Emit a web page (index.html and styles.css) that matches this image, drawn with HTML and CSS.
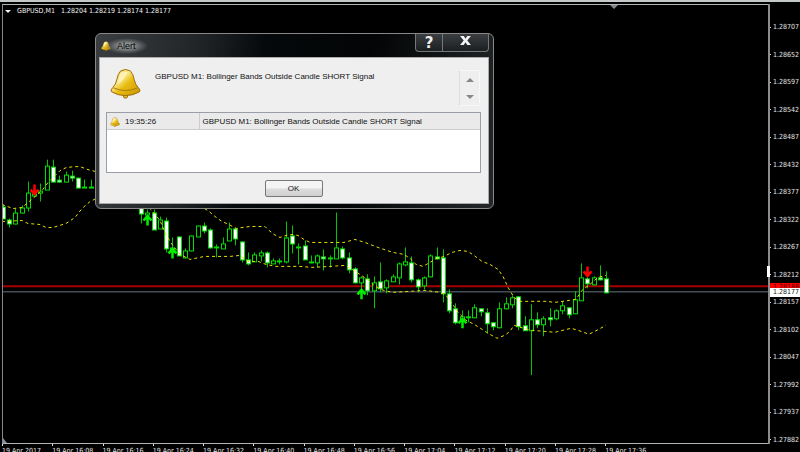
FILE: index.html
```
<!DOCTYPE html>
<html lang="en">
<head>
    <meta charset="UTF-8">
    <meta name="viewport" content="width=device-width, initial-scale=1.0">
    <title>GBPUSD,M1</title>
    <link rel="stylesheet" href="styles.css">
</head>
<body>
    <!-- bell symbol, used three times in the alert window -->
    <svg class="defs" aria-hidden="true">
        <defs>
            <linearGradient id="gold" x1="0" y1="0" x2="1" y2="1">
                <stop offset="0" stop-color="#f0c52c"/>
                <stop offset="0.35" stop-color="#fbe98a"/>
                <stop offset="0.55" stop-color="#e9bd12"/>
                <stop offset="1" stop-color="#c79400"/>
            </linearGradient>
            <symbol id="bell" viewBox="0 0 32 32">
                <circle cx="16" cy="29" r="2.2" fill="#e8b914" stroke="#9a6a10"/>
                <path d="M11 3Q16 0 21 3Q24 6 25 12Q26 17 29 20Q32 23 30.500 24.500Q24 28.500 16 28.500Q8 28.500 1.500 24.500Q0 23 3 20Q6 17 7 12Q8 6 11 3Z" fill="url(#gold)" stroke="#9a6a10"/>
                <path d="M3.500 20.500Q16 26 28.500 20.500" fill="none" stroke="#a87810"/>
                <path d="M11 5Q14.500 3 18 4.500Q15 12 8.500 17Q9 9 11 5Z" fill="#fff8cc" opacity=".7"/>
            </symbol>
        </defs>
    </svg>

    <div class="terminal">
        <main class="plot">
            <svg class="chart" viewBox="3 5 765 439" preserveAspectRatio="none"></svg>
            <p class="quote"><i></i><span>GBPUSD,M1</span><span>1.28204 1.28219 1.28174 1.28177</span></p>
        </main>
        <aside class="prices">
            <ol></ol>
            <i class="handle"></i>
            <b class="tag ask">1.28188</b>
            <b class="tag bid">1.28177</b>
        </aside>
        <ol class="times"></ol>
    </div>

    <section class="alert" role="dialog" aria-labelledby="title">
        <header>
            <svg class="bell-small"><use href="#bell"/></svg>
            <h1 id="title">Alert</h1>
            <div class="win-btns">
                <button class="help" aria-label="Help">?</button>
                <button class="close" aria-label="Close">
                    <svg viewBox="0 0 12 10"><path d="M0 0H4L6 3L8 0H12L8 5L12 10H8L6 7L4 10H0L4 5Z"/></svg>
                </button>
            </div>
        </header>
        <div class="content">
            <div class="top">
                <svg class="bell-big"><use href="#bell"/></svg>
                <p>GBPUSD M1: Bollinger Bands Outside Candle SHORT Signal</p>
                <div class="spin">
                    <button aria-label="Up"><i class="up"></i></button>
                    <button aria-label="Down"><i class="down"></i></button>
                </div>
            </div>
            <div class="list">
                <table>
                    <tr>
                        <td class="time"><svg class="bell-row"><use href="#bell"/></svg>19:35:26</td>
                        <td>GBPUSD M1: Bollinger Bands Outside Candle SHORT Signal</td>
                    </tr>
                </table>
            </div>
            <button class="ok">OK</button>
        </div>
    </section>
    <script src="chart.js"></script>
</body>
</html>
```
FILE: styles.css
```
*{
    box-sizing: border-box;
    margin: 0;
    padding: 0;
}
body{
    background-color: #000;
    color: #e4e4e4;
    font-family: "DejaVu Sans Condensed", "DejaVu Sans", sans-serif;
    font-size: 7px;
    line-height: 8px;
    overflow: hidden;
}
ol{
    list-style: none;
}
button{
    font: inherit;
    border: 0;
    background: none;
}
.defs{
    position: absolute;
    width: 0;
    height: 0;
}

/* chart window */
.terminal{
    display: grid;
    grid-template-columns: 1fr 32px;
    grid-template-rows: 1fr 8px;
    height: 100vh;
    padding: 2px 0 0 2px;
    border-top: 2px solid #c4c8c8;
}
.plot{
    position: relative;
    min-height: 0;
    border: 1px solid #b4b4b4;
    border-left-color: #888;
    border-right: 0;
}
.chart{
    display: block;
    width: 100%;
    height: 100%;
}
.quote{
    position: absolute;
    top: 2px;
    left: 2px;
    display: flex;
    gap: 6px;
    align-items: center;
    color: #f4f4f4;
}
.quote i{
    border: 3px solid transparent;
    border-top-color: #eee;
    border-bottom: 0;
}

/* price scale */
.prices{
    position: relative;
    border-left: 2px solid #8c8c8c;
    padding-top: 19px;
}
.prices ol{
    display: flex;
    flex-direction: column;
    justify-content: space-between;
    height: 100%;
}
.prices li{
    display: flex;
    align-items: center;
    gap: 2px;
    height: 8px;
}
.prices li::before{
    content: "";
    width: 1px;
    height: 1px;
    background-color: #ddd;
}
.handle{
    position: absolute;
    left: -3px;
    top: 262px;
    width: 3px;
    height: 11px;
    background-color: #fff;
}
.tag{
    position: absolute;
    left: 0;
    right: 0;
    padding-left: 3px;
    font-weight: normal;
    overflow: hidden;
}
.ask{
    top: 279px;
    height: 5px;
    background-color: #f00;
    color: #400;
}
.bid{
    top: 284px;
    height: 9px;
    background-color: #fff;
    color: #222;
}

/* time scale */
.times{
    grid-column: 1 / 3;
    display: flex;
    overflow: hidden;
}
.times li{
    flex: none;
    width: 6.3%;
    white-space: nowrap;
}
.times li::before{
    content: "";
    display: block;
    width: 1px;
    height: 2px;
    margin-bottom: 1px;
    background-color: #ddd;
}

/* alert window */
.alert{
    position: absolute;
    left: 95px;
    top: 33px;
    width: 399px;
    padding: 0 4px 4px 3px;
    border: 1px solid #888;
    border-radius: 6px;
    background: linear-gradient(100deg, #3a3e40 0, #202426 25%, #06090b 40%, #020405 65%, #24282a 100%);
    color: #111;
    font-family: "Liberation Sans", sans-serif;
    font-size: 8px;
    line-height: 12px;
}
.alert header{
    display: flex;
    align-items: center;
    height: 23px;
    padding-left: 2px;
}
.bell-small, .bell-row{
    width: 10px;
    height: 10px;
}
.alert h1{
    margin-left: -6px;
    padding: 2px 12px;
    color: #000;
    font-size: 9px;
    font-weight: normal;
    background: radial-gradient(closest-side, #909394 30%, #6c707180 75%, #33373900);
}
.win-btns{
    display: flex;
    align-self: flex-start;
    height: 18px;
    margin-left: auto;
    border: 1px solid #777;
    border-top: 0;
    border-radius: 0 0 4px 4px;
    background: linear-gradient(#3a3e40, #1c1f21);
}
.help{
    width: 27px;
    border-right: 1px solid #777;
    color: #eee;
    font: bold 15px "DejaVu Sans", sans-serif;
}
.close{
    width: 45px;
}
.close svg{
    width: 11px;
    height: 9px;
    fill: #f4f4f4;
}
.content{
    padding: 10px 7px 6px 6px;
    border: 1px solid #aaa;
    background-color: #efefef;
    text-align: center;
}
.top{
    display: flex;
    align-items: flex-start;
    height: 44px;
    padding: 0 1px 0 4px;
    text-align: left;
}
.bell-big{
    flex: none;
    width: 31px;
    height: 31px;
}
.top p{
    flex: 1;
    padding: 3px 0 0 14px;
}
.spin{
    width: 21px;
    margin-top: 2px;
    border: 1px solid #f8f8f8;
    border-left-color: #ddd;
}
.spin button{
    display: flex;
    align-items: center;
    justify-content: center;
    width: 100%;
    height: 17px;
}
.spin i{
    border: 0 solid transparent;
    border-width: 0 4px;
}
.spin .up{
    border-bottom: 4px solid #888;
}
.spin .down{
    border-top: 4px solid #888;
}
.list{
    height: 61px;
    border: 1px solid #9a9ea6;
    background-color: #fff;
}
.list table{
    width: 100%;
    border-collapse: collapse;
    text-align: left;
}
.list td{
    height: 16px;
    padding: 2px 3px 0;
    border-bottom: 1px solid #ccc;
    background-color: #eaeaea;
}
.list .time{
    width: 92px;
    border-right: 1px solid #ccc;
}
.bell-row{
    margin-right: 5px;
    vertical-align: middle;
}
.ok{
    width: 58px;
    height: 17px;
    margin-top: 7px;
    border: 1px solid #777;
    border-radius: 2px;
    background: linear-gradient(#f4f4f4 45%, #dcdcdc 55%, #cfcfcf);
    color: #111;
}
```
FILE: chart.js
```
// candles: index, high, body top, body bottom, low, type (u = up, d = down)
var candles = [
    [0,205,207,219,219,'d'],[1,219,220,224,228,'d'],[2,209,213,224,225,'u'],[3,206,208,213,214,'u'],
    [4,182,193,208,212,'u'],[5,188,194,196,197,'u'],[6,184,191,193,202,'u'],[7,160,166,190,190,'u'],
    [8,160,167,182,182,'d'],[9,176,180,182,183,'d'],[10,172,175,182,182,'u'],[11,171,176,178,182,'d'],
    [12,178,178,188,188,'d'],[13,180,187,188,188,'u'],[14,180,187,188,188,'u'],
    [22,205,207,214,224,'d'],[23,210,213,215,217,'u'],[24,210,213,230,230,'d'],[25,217,220,229,229,'u'],
    [26,218,221,249,253,'d'],[27,238,248,252,253,'u'],[28,237,237,256,256,'d'],[29,249,251,258,259,'u'],
    [30,236,236,251,252,'u'],[31,226,226,237,237,'u'],[32,223,226,231,234,'d'],[33,229,230,248,249,'d'],
    [34,245,247,248,258,'u'],[35,238,244,249,249,'u'],[36,223,229,241,241,'u'],[37,228,229,239,246,'d'],
    [38,242,242,260,263,'d'],[39,253,260,264,266,'d'],[40,253,255,262,262,'u'],[41,251,253,256,262,'u'],
    [42,252,253,263,268,'d'],[43,259,261,264,264,'u'],[44,259,261,262,265,'u'],[45,222,238,262,264,'u'],
    [46,226,236,244,254,'d'],[47,244,247,248,265,'u'],[48,241,246,260,260,'d'],[49,256,262,263,264,'u'],
    [50,255,256,263,268,'u'],[51,250,257,259,271,'d'],[52,256,258,259,268,'u'],[53,213,248,259,259,'u'],
    [54,247,249,258,260,'d'],[55,253,258,270,274,'d'],[56,268,269,283,284,'d'],[57,277,278,283,290,'u'],
    [58,275,279,291,296,'d'],[59,277,283,291,309,'u'],[60,263,282,289,293,'d'],[61,280,281,288,294,'u'],
    [62,275,277,282,282,'u'],[63,263,264,278,285,'u'],[64,248,262,265,267,'u'],[65,257,263,280,283,'d'],
    [66,279,280,287,293,'d'],[67,277,278,286,290,'u'],[68,255,256,277,278,'u'],[69,248,257,259,260,'d'],
    [70,250,258,294,303,'d'],[71,290,294,311,314,'d'],[72,304,309,323,325,'d'],[73,311,317,320,322,'u'],
    [74,311,317,318,323,'u'],[75,305,308,318,318,'u'],[76,309,309,312,317,'d'],[77,309,313,324,334,'d'],
    [78,323,323,327,331,'d'],[79,303,309,328,329,'u'],[80,298,304,309,310,'u'],[81,296,298,305,309,'u'],
    [82,297,297,327,331,'d'],[83,317,326,331,331,'d'],[84,305,320,331,376,'u'],[85,313,320,325,329,'d'],
    [86,317,319,325,337,'u'],[87,309,318,320,327,'d'],[88,310,311,319,321,'u'],[89,302,306,311,315,'u'],
    [90,308,308,315,319,'d'],[91,292,300,314,315,'u'],[92,264,278,301,301,'u'],[93,277,279,284,289,'d'],
    [94,277,278,285,286,'u'],[95,266,278,280,281,'d'],[96,272,279,293,294,'d']
];

// bollinger bands
var bands = [
    '2,205 13,209 22,208 28,203 35,197 42,191 48,183 55,176 60,171 66,168 74,167 80,167 88,170 96,172 150,180 208,211 215,217 222,222 229,225 236,229 242,228 250,227 265,227 268,230 274,235 280,238 286,236 292,235 298,236 304,240 310,243 344,243 355,240 365,243 378,248 393,253 404,255 410,259 416,265 423,267 430,263 437,259 444,257 452,253 460,251 468,252 474,256 482,262 490,265 498,270 503,277 508,288 514,298 520,302 545,302 555,303 563,302 576,300 582,291 590,285 598,278 606,276',
    '2,222 22,221 28,224 40,225 46,228 53,228 66,224 75,218 82,209 90,202 96,199 140,200 152,211 160,221 166,235 172,245 180,255 190,260 200,258 204,257 230,257 240,256 248,262 258,262 266,265 276,267 300,267 312,268 330,267 345,266 352,270 360,275 367,280 374,286 380,290 392,293 410,292 425,291 440,293 446,296 452,304 458,313 466,321 474,325 482,330 488,334 497,339 505,336 510,332 514,326 520,328 531,331 555,333 563,331 571,329 578,331 589,335 597,331 606,326'
];

// signal arrows: index, tip y, direction
var arrows = [[5,197,'down'],[23,214,'up'],[27,247,'up'],[57,288,'up'],[73,317,'up'],[93,279,'down']];

function getX(i){
    return Math.round(2.7 + i * 6.288);
}

var html = '<path d="M3 287H768" stroke="#a80000" stroke-width="2"/>';
html += '<path d="M3 292.5H768" stroke="#667482"/>';
for(var i=0;i<candles.length;i++){
    var c = candles[i];
    var x = getX(c[0]);
    var color = c[5] == 'd' ? '#fff' : '#000';
    html += '<path d="M' + (x + 0.5) + ' ' + c[1] + 'V' + c[4] + '" stroke="#00c800"/>';
    html += '<rect x="' + (x - 1.5) + '" y="' + (c[2] + 0.5) + '" width="4" height="' + Math.max(c[3] - c[2], 0.5) + '" fill="' + color + '" stroke="#00e000"/>';
}
for(var i=0;i<bands.length;i++){
    html += '<polyline points="' + bands[i] + '" fill="none" stroke="#e8e000" stroke-dasharray="3 3"/>';
}
for(var i=0;i<arrows.length;i++){
    var down = arrows[i][2] == 'down';
    html += '<path transform="translate(' + (getX(arrows[i][0]) + 0.5) + ' ' + arrows[i][1] + ')' + (down ? ' scale(1 -1)' : '') + '" d="M0 12V3M-4 7L0 2.500L4 7" fill="none" stroke-width="2.500" stroke="' + (down ? '#f00' : '#00f000') + '"/>';
}
// shift marker and corner mark
html += '<path d="M610 5H618L614 9Z" fill="#808890"/><path d="M3 439L7 444H3Z" fill="#8090a0"/>';
document.querySelector('.chart').innerHTML = html;

// scales
var prices = '';
for(var p=128707;p>=127882;p-=55){
    prices += '<li>' + (p / 100000).toFixed(5) + '</li>';
}
document.querySelector('.prices ol').innerHTML = prices;

var times = '<li>19 Apr 2017</li>';
for(var m=8;m<=96;m+=8){
    var min = m % 60;
    times += '<li>19 Apr ' + (16 + Math.floor(m / 60)) + ':' + (min < 10 ? '0' + min : min) + '</li>';
}
document.querySelector('.times').innerHTML = times;
```
